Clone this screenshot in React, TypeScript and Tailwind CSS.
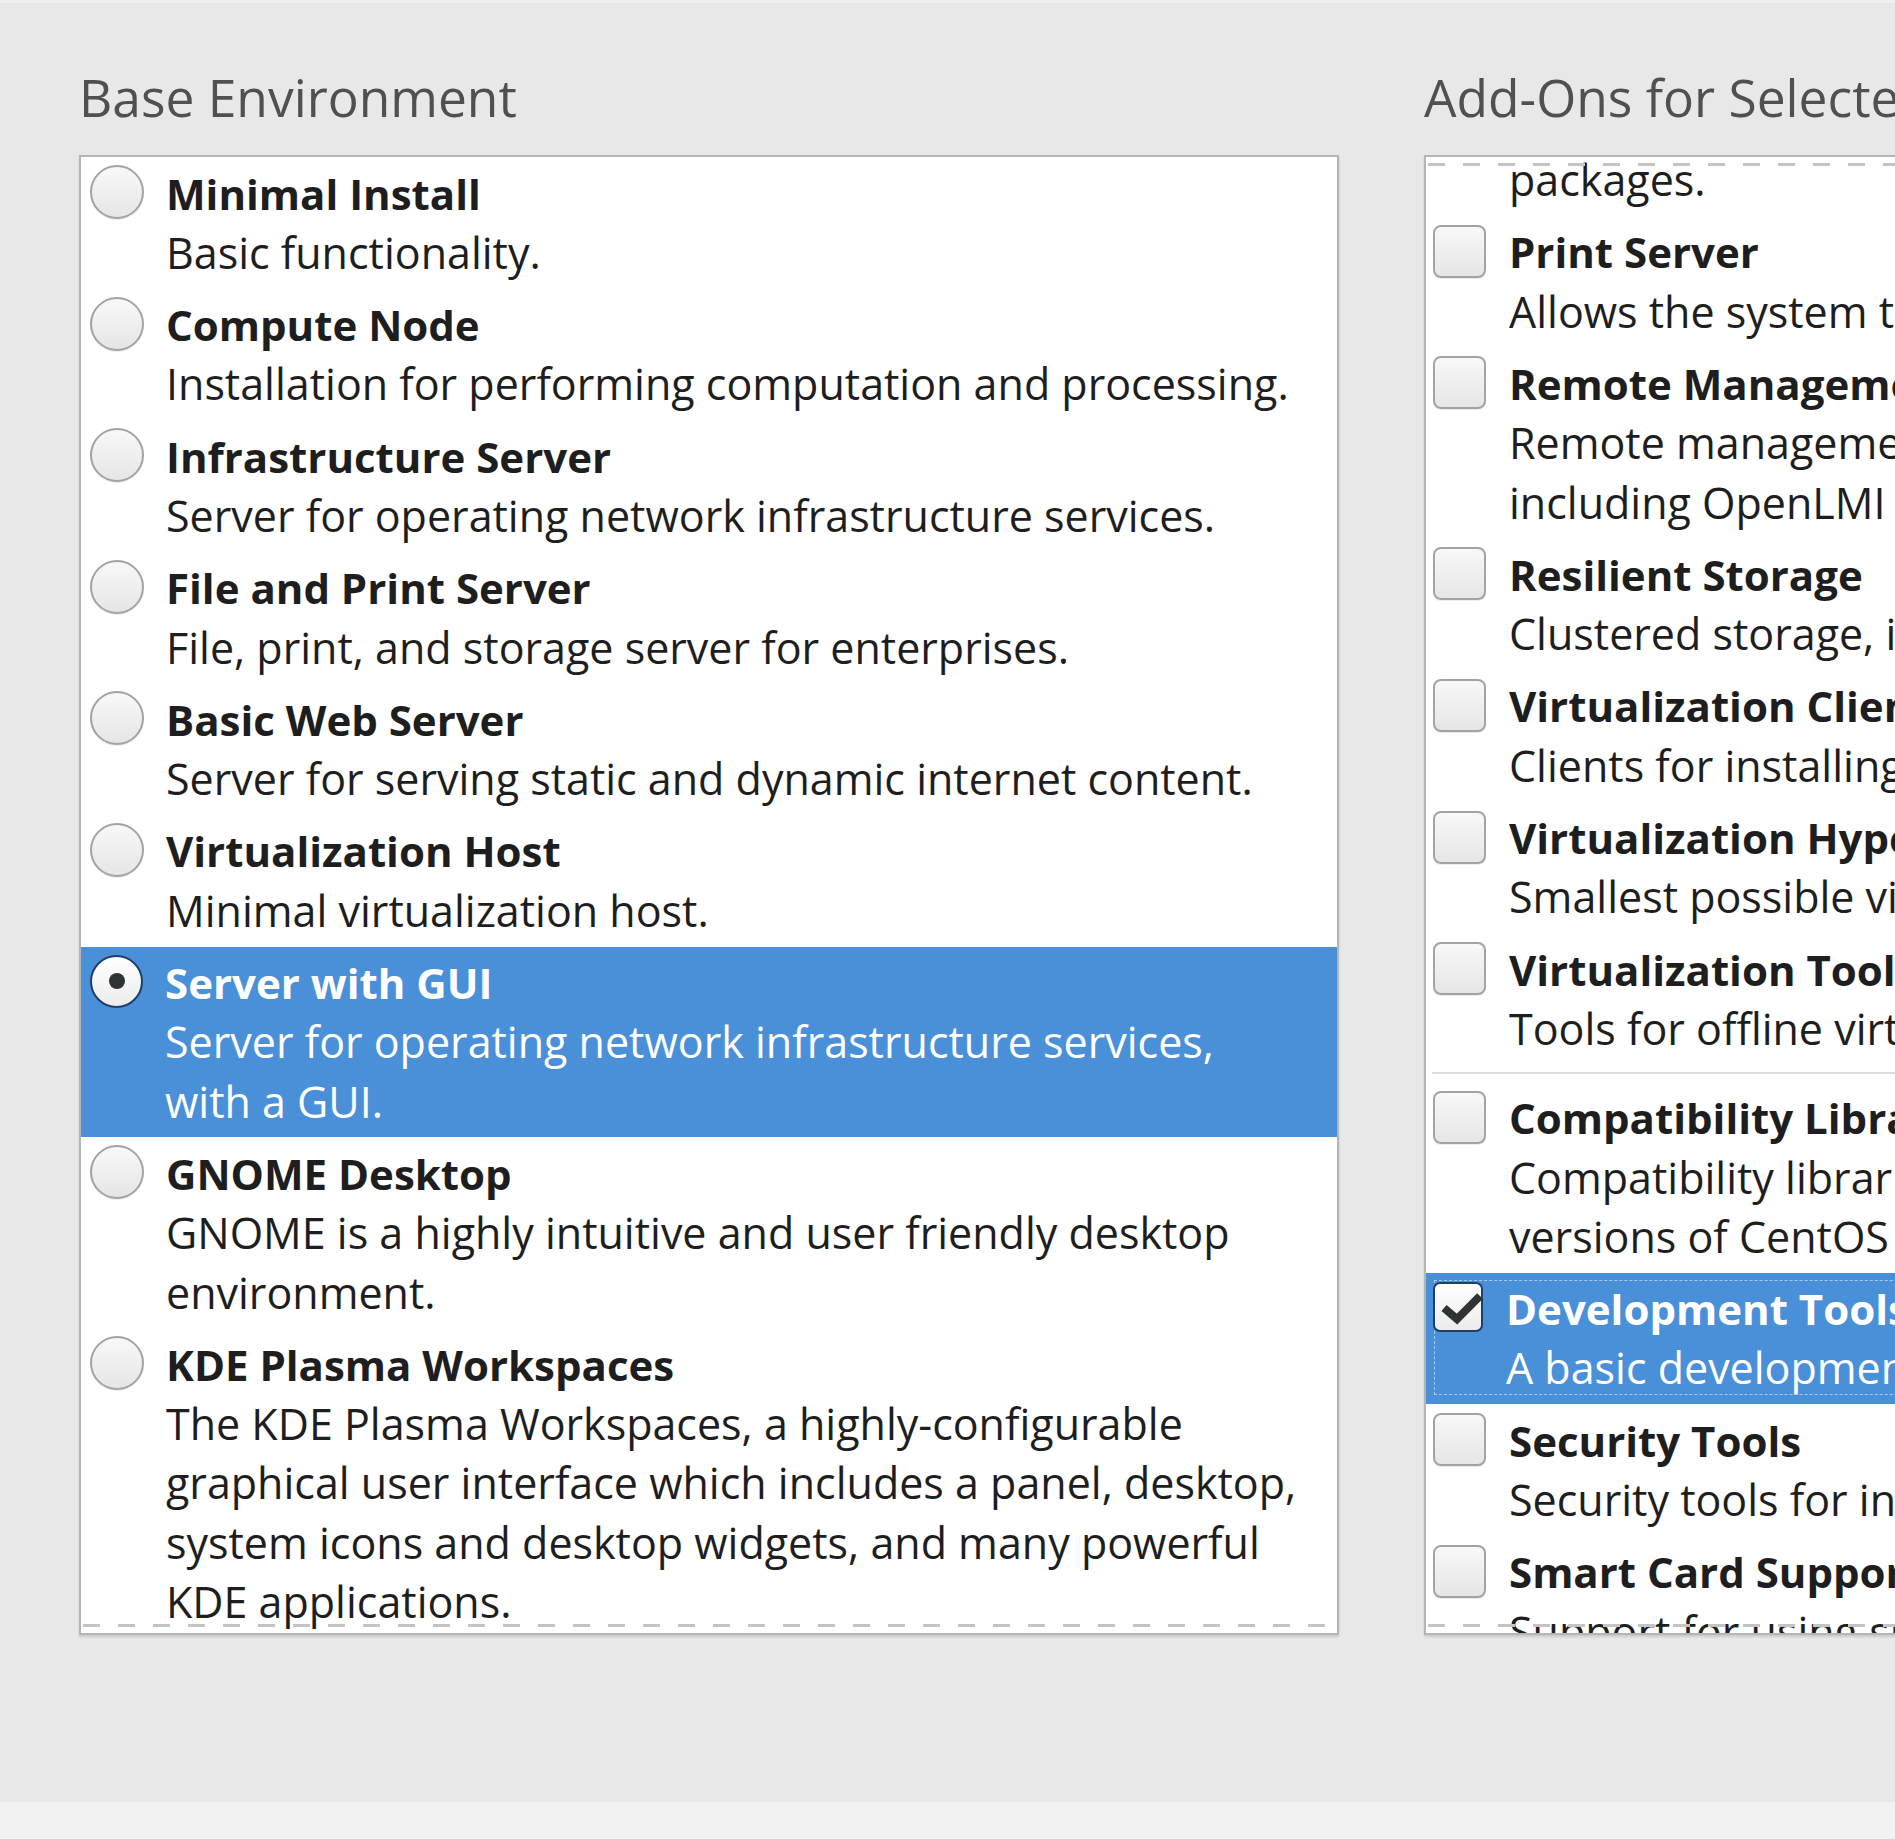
import React from "react";

type Item = {
  title: string;
  lines: string[];
  selected?: boolean;
};

const baseEnvs: Item[] = [
  { title: "Minimal Install", lines: ["Basic functionality."] },
  { title: "Compute Node", lines: ["Installation for performing computation and processing."] },
  { title: "Infrastructure Server", lines: ["Server for operating network infrastructure services."] },
  { title: "File and Print Server", lines: ["File, print, and storage server for enterprises."] },
  { title: "Basic Web Server", lines: ["Server for serving static and dynamic internet content."] },
  { title: "Virtualization Host", lines: ["Minimal virtualization host."] },
  {
    title: "Server with GUI",
    lines: ["Server for operating network infrastructure services,", "with a GUI."],
    selected: true,
  },
  {
    title: "GNOME Desktop",
    lines: ["GNOME is a highly intuitive and user friendly desktop", "environment."],
  },
  {
    title: "KDE Plasma Workspaces",
    lines: [
      "The KDE Plasma Workspaces, a highly-configurable",
      "graphical user interface which includes a panel, desktop,",
      "system icons and desktop widgets, and many powerful",
      "KDE applications.",
    ],
  },
];

const addOnsTop: Item[] = [
  {
    title: "PostgreSQL Database Server",
    lines: ["The PostgreSQL SQL database server, and associated", "packages."],
  },
  { title: "Print Server", lines: ["Allows the system to act as a print server."] },
  {
    title: "Remote Management for Linux",
    lines: ["Remote management interface for CentOS Linux,", "including OpenLMI and SNMP."],
  },
  { title: "Resilient Storage", lines: ["Clustered storage, including the GFS2 file system."] },
  { title: "Virtualization Client", lines: ["Clients for installing and managing virtualization instances."] },
  { title: "Virtualization Hypervisor", lines: ["Smallest possible virtualization host installation."] },
  { title: "Virtualization Tools", lines: ["Tools for offline virtual image management."] },
];

const addOnsBottom: Item[] = [
  {
    title: "Compatibility Libraries",
    lines: ["Compatibility libraries for applications built on previous", "versions of CentOS Linux."],
  },
  { title: "Development Tools", lines: ["A basic development environment."], selected: true },
  { title: "Security Tools", lines: ["Security tools for integrity and trust verification."] },
  { title: "Smart Card Support", lines: ["Support for using smart card authentication."] },
];

const Radio = ({ checked }: { checked?: boolean }) =>
  checked ? (
    <div className="w-[53px] h-[53px] rounded-full border-2 border-[#1d3f6a] bg-gradient-to-b from-white to-[#ececec] flex items-center justify-center shrink-0">
      <div className="w-[16px] h-[16px] rounded-full bg-[#2e3436]"></div>
    </div>
  ) : (
    <div className="w-[54px] h-[54px] rounded-full border-2 border-[#a3a3a3] bg-gradient-to-b from-[#f8f8f8] to-[#e6e6e6] shadow-[0_1px_0_rgba(0,0,0,0.08)] shrink-0"></div>
  );

const Checkbox = ({ checked }: { checked?: boolean }) =>
  checked ? (
    <div className="relative w-[50px] h-[50px] rounded-[7px] border-2 border-[#1d3f6a] bg-gradient-to-b from-white to-[#ececec] shrink-0">
      <svg viewBox="0 0 50 50" className="absolute left-0 top-0 w-[50px] h-[50px] overflow-visible">
        <path d="M9 24 L22 35 L45 12" stroke="#2e3436" strokeWidth="8" fill="none" />
      </svg>
    </div>
  ) : (
    <div className="w-[53px] h-[53px] rounded-[8px] border-2 border-[#a3a3a3] bg-gradient-to-b from-[#f8f8f8] to-[#e6e6e6] shadow-[0_1px_0_rgba(0,0,0,0.08)] shrink-0"></div>
  );

const Row = ({ item, kind }: { item: Item; kind: "radio" | "check" }) => (
  <div
    className={
      "relative flex items-start py-[6.5px] leading-[59.3px] " +
      (item.selected ? "bg-[#4a90d9] text-white" : "text-[#1e1e1e]")
    }
  >
    {item.selected && kind === "check" && (
      <div className="absolute left-[8px] top-[7px] bottom-[9px] right-[8px] border-[1.5px] border-dashed border-[#a9c9f0]"></div>
    )}
    {kind === "radio" ? (
      <div className="ml-[9px] mr-[22px] mt-[1.5px]">
        <Radio checked={item.selected} />
      </div>
    ) : (
      <div className="ml-[7px] mr-[23px] mt-[2.5px]">
        <Checkbox checked={item.selected} />
      </div>
    )}
    <div className="flex flex-col whitespace-nowrap text-[43px]">
      <span className="font-bold text-[42px]">{item.title}</span>
      {item.lines.map((l) => (
        <span key={l}>{l}</span>
      ))}
    </div>
  </div>
);

const Dashes = ({ pos }: { pos: "top" | "bottom" }) => (
  <div
    className={
      "absolute left-0 right-0 h-[3px] bg-[repeating-linear-gradient(90deg,transparent_0_2px,#c4c4c4_2px_19px,transparent_19px_35px)] " +
      (pos === "top" ? "top-[6px]" : "bottom-[6px]")
    }
  ></div>
);

export default function App() {
  return (
    <div className="w-[1895px] h-[1839px] overflow-hidden bg-[#e8e8e8] flex flex-col font-['Open_Sans',sans-serif]">
      <div className="h-[3px] bg-[#eeeeee]"></div>
      <div className="flex-1 flex gap-[85px] pl-[79px] pt-[64px]">
        <section className="flex flex-col w-[1260px] shrink-0">
          <h2 className="text-[51.5px] leading-[60px] text-[#505050] font-normal mb-[28px]">
            Base Environment
          </h2>
          <div className="relative h-[1480px] border-2 border-[#b5b5b5] bg-white overflow-hidden shadow-[0_2px_2px_rgba(0,0,0,0.12)]">
            {baseEnvs.map((item) => (
              <Row key={item.title} item={item} kind="radio" />
            ))}
            <Dashes pos="bottom" />
          </div>
        </section>

        <section className="flex flex-col w-[1260px] shrink-0">
          <h2 className="text-[51.5px] leading-[60px] text-[#505050] font-normal mb-[28px] whitespace-nowrap">
            Add-Ons for Selected Environment
          </h2>
          <div className="relative h-[1480px] border-2 border-[#b5b5b5] bg-white overflow-hidden shadow-[0_2px_2px_rgba(0,0,0,0.12)]">
            <div className="mt-[-132px]">
              {addOnsTop.map((item) => (
                <Row key={item.title} item={item} kind="check" />
              ))}
              <div className="py-[7.5px] pl-[6px]">
                <div className="h-[2px] bg-[#dcdcdc]"></div>
              </div>
              {addOnsBottom.map((item) => (
                <Row key={item.title} item={item} kind="check" />
              ))}
            </div>
            <Dashes pos="top" />
            <Dashes pos="bottom" />
          </div>
        </section>
      </div>
      <div className="h-[37px] bg-[#f2f2f2]"></div>
    </div>
  );
}
